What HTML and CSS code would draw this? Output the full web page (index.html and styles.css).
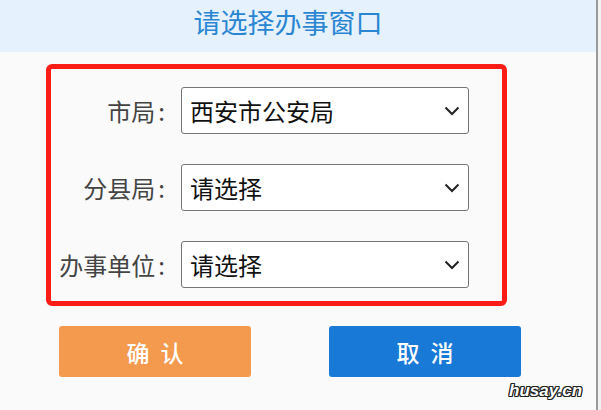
FILE: index.html
```html
<!DOCTYPE html>
<html lang="zh-CN">
<head>
<meta charset="utf-8">
<title>请选择办事窗口</title>
<link rel="stylesheet" href="styles.css">
</head>
<body>
<div class="app">
  <div class="header"><span class="title">请选择办事窗口</span></div>
  <div class="panel">
    <div class="label">市局<span class="colon">:</span></div>
    <div class="select"><span>西安市公安局</span><svg class="chev" width="16" height="10" viewBox="0 0 16 10"><polyline points="1.5,1.5 8,8 14.5,1.5" fill="none" stroke="#222" stroke-width="2"/></svg></div>
    <div class="label">分县局<span class="colon">:</span></div>
    <div class="select"><span>请选择</span><svg class="chev" width="16" height="10" viewBox="0 0 16 10"><polyline points="1.5,1.5 8,8 14.5,1.5" fill="none" stroke="#222" stroke-width="2"/></svg></div>
    <div class="label">办事单位<span class="colon">:</span></div>
    <div class="select"><span>请选择</span><svg class="chev" width="16" height="10" viewBox="0 0 16 10"><polyline points="1.5,1.5 8,8 14.5,1.5" fill="none" stroke="#222" stroke-width="2"/></svg></div>
  </div>
  <div class="actions">
    <div class="btn btn-ok">确认</div>
    <div class="btn btn-cancel">取消</div>
  </div>
  <div class="watermark">husay.cn</div>
</div>
</body>
</html>
```

FILE: styles.css
```css
html, body {
  margin: 0;
  padding: 0;
}
body {
  background: #f3f3f3;
  width: 601px;
  height: 410px;
  overflow: hidden;
  font-family: "Noto Sans CJK SC", "Noto Sans", sans-serif;
}
.app {
  position: relative;
  width: 596px;
  height: 410px;
  background: #fafafa;
  border-right: 2px solid #9a9a9a;
}
.header {
  height: 52px;
  background: #e5f1fd;
  display: flex;
  justify-content: center;
  padding-right: 20px;
  box-sizing: border-box;
}
.title {
  font-size: 27px;
  line-height: 43px;
  color: #2a86d2;
}
.panel {
  margin: 12px 0 0 46px;
  width: 461px;
  height: 242px;
  box-sizing: border-box;
  border: 5px solid #fb1d16;
  border-radius: 6px;
  padding: 18px 33px 12px 0;
  display: grid;
  grid-template-columns: 125px 288px;
  grid-auto-rows: 47px;
  column-gap: 5px;
  row-gap: 30px;
}
.label {
  font-size: 24px;
  color: #444;
  display: flex;
  align-items: center;
  justify-content: flex-end;
  padding-right: 11px;
}
.colon {
  margin-left: 3px;
}
.select {
  background: #fff;
  border: 1px solid #767676;
  border-radius: 3px;
  box-sizing: border-box;
  display: flex;
  align-items: center;
  justify-content: space-between;
  padding: 0 8px 0 8px;
  font-size: 24px;
  color: #111;
}
.chev {
  display: block;
}
.actions {
  display: flex;
  gap: 78px;
  margin: 20px 0 0 59px;
}
.btn {
  width: 192px;
  height: 51px;
  border-radius: 3px;
  color: #fff;
  font-size: 23px;
  font-weight: 500;
  letter-spacing: 11px;
  padding-left: 11px;
  box-sizing: border-box;
  display: flex;
  align-items: center;
  justify-content: center;
}
.btn-ok {
  background: #f39a4e;
}
.btn-cancel {
  background: #1879d6;
}
.watermark {
  position: absolute;
  left: 509px;
  top: 381px;
  font-family: "Liberation Sans", Arial, sans-serif;
  font-weight: bold;
  font-style: italic;
  font-size: 17px;
  color: #fff;
  text-shadow: -1px -1px 0 #222, 1px -1px 0 #222, -1px 1px 0 #222, 1px 1px 0 #222, 0 1px 0 #222, 0 -1px 0 #222, 1px 0 0 #222, -1px 0 0 #222;
}
```
